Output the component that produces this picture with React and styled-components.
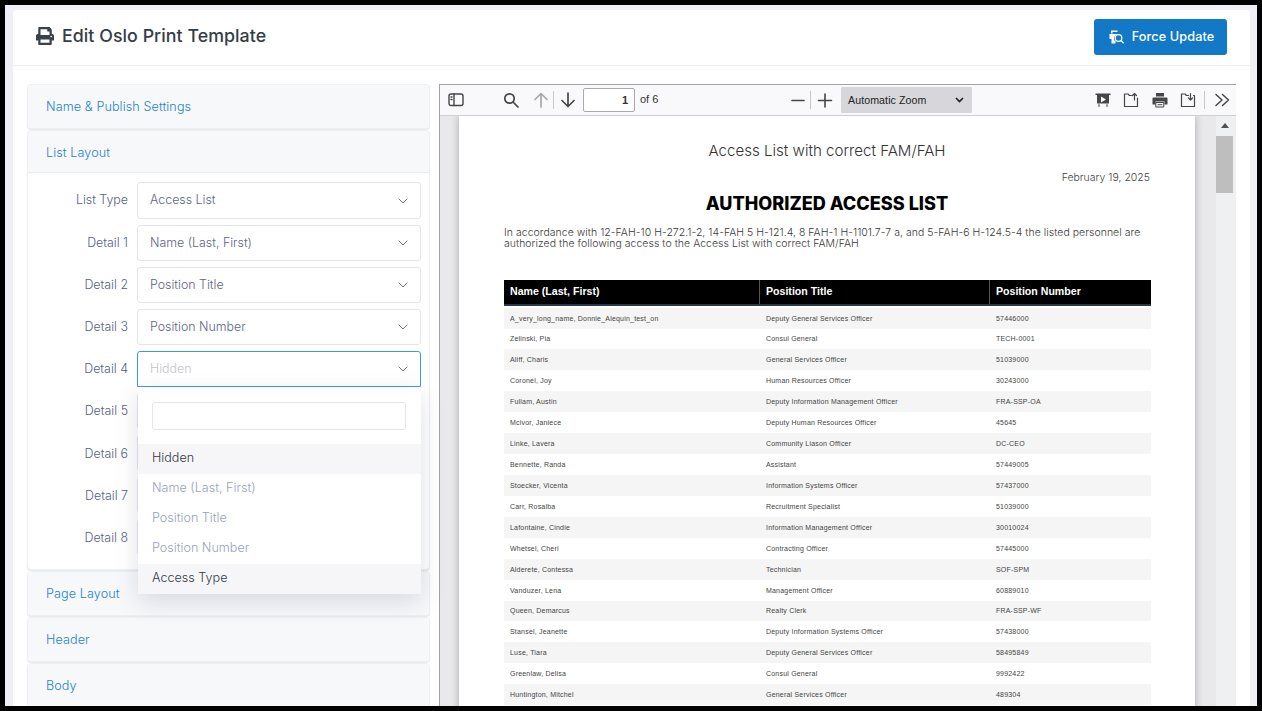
import React from "react";
import styled, { createGlobalStyle } from "styled-components";
import { FaPrint } from "react-icons/fa";

const Global = createGlobalStyle`
  html, body { margin: 0; padding: 0; height: 100%; overflow: hidden; background: #000; }
  #root { height: 100%; }
  * { box-sizing: border-box; }
`;
const Frame = styled.div`
  height: 711px; width: 1262px; border: 5px solid #000; background: #f0eff5;
  padding: 5px 7px 0 8px; overflow: hidden; font-family: Inter, "Noto Sans", sans-serif; display: flex;
`;
const Card = styled.div`
  flex: 1; background: #fff; border-radius: 4px 4px 0 0; display: flex; flex-direction: column; min-width: 0;
`;
const TopBar = styled.header`
  height: 56px; flex: none; border-bottom: 1px solid #eef0f3; display: flex; align-items: center;
  justify-content: space-between; padding: 0 23px 2px 23px;
`;
const Title = styled.h1`
  margin: 0 0 2px; display: flex; align-items: center; gap: 8px; font-size: 17.8px; font-weight: 500; color: #343d46;
  letter-spacing: 0.05px;
  svg { width: 18px; height: 18px; color: #3a4249; }
`;
const PrimaryButton = styled.button`
  width: 133px; height: 36px; background: #1379c6; color: #fff; border: 0; border-radius: 3px; font: 500 12.7px Inter, sans-serif;
  display: flex; align-items: center; justify-content: center; gap: 7px; padding: 0 0 0 1px; letter-spacing: 0.1px;
`;
const Body = styled.div`
  flex: 1; min-height: 0; display: flex; gap: 9px; padding: 18px 14px 0 14px; overflow: hidden;
`;
const LeftCol = styled.div` width: 403px; flex: none; display: flex; flex-direction: column; gap: 1px; `;
const Accordion = styled.section`
  flex: none; border: 1px solid #edeff3; border-radius: 4px; background: #fff; box-shadow: 0 1px 1px #e8e9ee;
`;
const AccHead = styled.div`
  height: ${p => p.$h || 43}px; background: #f7f8fa; color: #2484cb; font-size: 12.6px; font-weight: 350; display: flex; align-items: center;
  padding: 0 18px 1px; border-radius: 4px; letter-spacing: 0.1px;
  ${p => p.$open && "border-bottom: 1px solid #e9ebef; border-radius: 4px 4px 0 0; padding-top: 2px; padding-bottom: 0;"}
`;
const AccBody = styled.div` height: 396px; padding: 9px 8px 0 0; display: flex; flex-direction: column; gap: 6px; `;
const FieldRow = styled.div`
  display: grid; grid-template-columns: 100px 1fr; column-gap: 9px; align-items: center; height: ${p => p.$h || 36}px; position: relative;
`;
const Label = styled.label` text-align: right; font-size: 12.4px; font-weight: 350; color: #575f88; padding-bottom: ${p => p.$pb || 0}px; `;
const Select = styled.div`
  height: 100%; border: 1px solid ${p => p.$focus ? "#3d9ae0" : "#e2e5ec"}; border-radius: 3px; display: flex; align-items: center;
  justify-content: space-between; padding: 0 12px 2px; font-size: 12.4px; font-weight: 350; color: ${p => p.$focus ? "#c3c5cd" : "#5e6585"}; background: #fff;
  ${p => p.$focus && "border-radius: 3px 3px 0 0;"}
  svg { margin-top: 2px; }
`;
const Menu = styled.div`
  position: absolute; left: 110px; right: 0; top: 36px; height: 207px; background: #fff; z-index: 3;
  box-shadow: 0 8px 22px rgba(60,70,100,.16); display: flex; flex-direction: column; padding-top: 15px;
`;
const SearchBox = styled.div` height: 28px; margin: 0 15px 14px 14px; border: 1px solid #e2e5ec; border-radius: 3px; flex: none; `;
const Option = styled.div`
  height: 30px; flex: none; padding: 0 14px 3px; display: flex; align-items: center; font-size: 12.6px; font-weight: 350;
  color: ${p => p.$active ? "#333a44" : "#9a9fbf"}; background: ${p => p.$active ? "#f6f6f9" : "#fff"};
`;
const Viewer = styled.div`
  width: 797px; flex: none; border: 1px solid #a3a3a6; border-right: 0; border-bottom: 0; display: flex; flex-direction: column; background: #e9e9ec; min-height: 0;
`;
const Toolbar = styled.div`
  height: 31px; flex: none; background: #f9f9fb; border-bottom: 1px solid #cfcfd3; display: grid;
  grid-template-columns: 350px 305px 1fr; font-family: "Liberation Sans", sans-serif; font-size: 11px; color: #15141a;
`;
const ToolGroup = styled.div` display: flex; align-items: center; `;
const ToolIcon = styled.svg`
  width: ${p => p.$w || 16}px; height: 16px; flex: none; margin-left: ${p => p.$ml || 0}px; fill: none; stroke: #45454a; stroke-width: 1.4; stroke-linecap: round; stroke-linejoin: round;
  opacity: ${p => p.$dim ? .45 : 1};
`;
const Sep = styled.span` width: 1px; height: 18px; background: #c8c8cc; flex: none; margin-left: ${p => p.$ml || 5}px; `;
const PageInput = styled.div`
  width: 52px; height: 24px; margin-left: 7px; border: 1px solid #a9a9ad; border-radius: 2px; background: #fff; text-align: right;
  padding: 5px 6px 0 0; font-size: 11px; font-weight: 700; color: #333; 
`;
const OfPages = styled.span` margin-left: 5px; color: #333; padding-bottom: 2px; `;
const ZoomSelect = styled.div`
  width: 131px; height: 26px; margin-left: 8px; background: #d7d7db; border-radius: 1px; display: flex; align-items: center; justify-content: space-between;
  padding: 0 8px 0 7px; font-size: 10.6px; color: #222; letter-spacing: .1px; 
`;
const ViewerMain = styled.div` flex: 1; min-height: 0; display: flex; overflow: hidden; `;
const PageArea = styled.div` flex: 1; min-width: 0; padding-left: 19px; overflow: hidden; `;
const Page = styled.div`
  width: 736px; height: 700px; background: #fff; box-shadow: 0 0 8px rgba(0,0,0,.28); padding: 25px 44px 0 45px; color: #333;
`;
const Scrollbar = styled.div`
  width: 20px; flex: none; background: #eff0f2; display: flex; flex-direction: column; align-items: center; padding: 7px 3px 0 0;
`;
const Arrow = styled.div` width: 0; height: 0; border: 4.5px solid transparent; border-top: 0; border-bottom: 5px solid #505050; margin-bottom: 8px; `;
const Thumb = styled.div` width: 17px; height: 57px; background: #bebebe; flex: none; `;
const DocHead = styled.div` text-align: center; font-size: 15.1px; font-weight: 300; color: #333; line-height: 20px; padding-right: 1px; `;
const DocDate = styled.div` text-align: right; font-size: 10.5px; font-weight: 350; color: #444; line-height: 14px; margin-top: 10px; padding-right: 1px; `;
const DocTitle = styled.div` text-align: center; font-size: 18.1px; font-weight: 800; color: #000; line-height: 24px; margin-top: 6px; padding-right: 1px; `;
const DocPara = styled.p` margin: 12px 0 0; font-size: 10.46px; line-height: 11.3px; color: #3a3a3a; font-weight: 350; letter-spacing: .05px; white-space: nowrap; `;
const Table = styled.div` margin-top: 30px; font-family: "Liberation Sans", sans-serif; `;
const HeadRow = styled.div`
  display: grid; grid-template-columns: 255px 230px 1fr; height: 26px; background: #000; border-bottom: 2px solid #2c3550; margin-bottom: 2px;
`;
const HeadCell = styled.div`
  color: #fff; font-weight: 700; font-size: 10.6px; padding: 5px 6px 0; border-left: ${p => p.$first ? 0 : "1px solid #555"};
`;
const Row = styled.div`
  display: grid; grid-template-columns: 256px 230px 1fr; height: 20.93px; background: ${p => p.$odd ? "#f5f5f5" : "#fff"}; align-items: center;
`;
const Cell = styled.div`
  font-size: 7px; letter-spacing: .2px; color: #444; padding: 0 6px; white-space: nowrap;
`;

const Chevron = () => (
  <svg width="10" height="6" viewBox="0 0 10 6" fill="none" stroke="#5c6472" strokeWidth="0.9"><path d="M.7.7 5 5l4.3-4.3" /></svg>
);
const fields = [["Detail 1","Name (Last, First)"],["Detail 2","Position Title"],["Detail 3","Position Number"]];
const rows = [
["A_very_long_name, Donnie_Alequin_test_on","Deputy General Services Officer","57446000"],
["Zelinski, Pia","Consul General","TECH-0001"],
["Aliff, Charis","General Services Officer","51039000"],
["Coronel, Joy","Human Resources Officer","30243000"],
["Fullam, Austin","Deputy Information Management Officer","FRA-SSP-OA"],
["Mcivor, Janiece","Deputy Human Resources Officer","45645"],
["Linke, Lavera","Community Liason Officer","DC-CEO"],
["Bennette, Randa","Assistant","57449005"],
["Stoecker, Vicenta","Information Systems Officer","57437000"],
["Carr, Rosalba","Recruitment Specialist","51039000"],
["Lafontaine, Cindie","Information Management Officer","30010024"],
["Whetsel, Cheri","Contracting Officer","57445000"],
["Alderete, Contessa","Technician","SOF-SPM"],
["Vanduzer, Lena","Management Officer","60889010"],
["Queen, Demarcus","Realty Clerk","FRA-SSP-WF"],
["Stansel, Jeanette","Deputy Information Systems Officer","57438000"],
["Luse, Tiara","Deputy General Services Officer","58495849"],
["Greenlaw, Delisa","Consul General","9992422"],
["Huntington, Mitchel","General Services Officer","489304"],
];

export default function App() {
  return (
    <Frame>
      <Global />
      <Card>
        <TopBar>
          <Title><FaPrint />Edit Oslo Print Template</Title>
          <PrimaryButton>
            <svg width="17" height="16" viewBox="0 0 17 16"><path fill="#fff" d="M3 1.5h6.5V3H4.5v1.5H3zM1.5 5h9.5A4.5 4.5 0 0 0 6.8 12H3.5v-2h-2z"/><circle cx="10.5" cy="9" r="3.3" fill="none" stroke="#fff" strokeWidth="1.2"/><path stroke="#fff" strokeWidth="1.3" d="m13 11.5 2.6 2.8"/><path fill="#fff" d="M3.5 12h4v2.5h-4z"/></svg>
            Force Update
          </PrimaryButton>
        </TopBar>
        <Body>
          <LeftCol>
            <Accordion><AccHead>Name &amp; Publish Settings</AccHead></Accordion>
            <Accordion>
              <AccHead $open $h={42}>List Layout</AccHead>
              <AccBody>
                <FieldRow $h={37}><Label $pb={2}>List Type</Label><Select>Access List<Chevron /></Select></FieldRow>
                {fields.map(([l, v]) => (
                  <FieldRow key={l}><Label $pb={2}>{l}</Label><Select>{v}<Chevron /></Select></FieldRow>
                ))}
                <FieldRow>
                  <Label $pb={2}>Detail 4</Label><Select $focus>Hidden<Chevron /></Select>
                  <Menu>
                    <SearchBox />
                    <Option $active>Hidden</Option>
                    <Option>Name (Last, First)</Option>
                    <Option>Position Title</Option>
                    <Option>Position Number</Option>
                    <Option $active>Access Type</Option>
                  </Menu>
                </FieldRow>
                {[5,6,7,8].map(n => (
                  <FieldRow key={n}><Label $pb={n === 5 ? 2 : 0}>Detail {n}</Label><Select /></FieldRow>
                ))}
              </AccBody>
            </Accordion>
            <Accordion><AccHead>Page Layout</AccHead></Accordion>
            <Accordion><AccHead>Header</AccHead></Accordion>
            <Accordion><AccHead>Body</AccHead></Accordion>
          </LeftCol>
          <Viewer>
            <Toolbar>
              <ToolGroup>
                <ToolIcon $ml={8} viewBox="0 0 16 16"><rect x="1" y="2" width="14" height="11.5" rx="2"/><path d="M6 2v11.5"/><path d="M3 5h1M3 7.5h1" /></ToolIcon>
                <ToolIcon $ml={39} viewBox="0 0 16 16" style={{strokeWidth:1.7}}><circle cx="6.5" cy="6.5" r="4.7"/><path d="m10 10 5 5"/></ToolIcon>
                <ToolIcon $ml={14} $dim viewBox="0 0 16 16" style={{strokeWidth:1.7}}><path d="M8 15V1.5M2 7.5l6-6 6 6"/></ToolIcon>
                <Sep $ml={4}/>
                <ToolIcon $ml={6} viewBox="0 0 16 16" style={{strokeWidth:1.7}}><path d="M8 1v13.5M2 8.5l6 6 6-6"/></ToolIcon>
                <PageInput>1</PageInput>
                <OfPages>of 6</OfPages>
              </ToolGroup>
              <ToolGroup>
                <ToolIcon viewBox="0 0 16 16" style={{strokeWidth:1.6}}><path d="M2 8.5h12"/></ToolIcon>
                <Sep $ml={4}/>
                <ToolIcon $ml={6} viewBox="0 0 16 16" style={{strokeWidth:1.6}}><path d="M1.5 8.5h13M8 2v13"/></ToolIcon>
                <ZoomSelect>Automatic Zoom
                  <svg width="9" height="6" viewBox="0 0 9 6" fill="none" stroke="#222" strokeWidth="1.7"><path d="m1 1 3.5 3.5L8 1"/></svg>
                </ZoomSelect>
              </ToolGroup>
              <ToolGroup>
                <ToolIcon viewBox="0 0 16 16"><path fill="#45454a" stroke="none" d="M.5 1.5h15V3H14v8.5H2V3H.5z"/><path fill="#f9f9fb" stroke="none" d="M6 4.5 11 7.5 6 10.5z"/><path d="M4 12.5v2M12 12.5v2" strokeWidth="1"/></ToolIcon>
                <ToolIcon $ml={12} viewBox="0 0 16 16" style={{strokeWidth:1.2}}><path d="M8.5 3.5H6.5L5 2H1.5v12.5h13V6"/><path d="M11.5 8V1.5M9.5 3.5l2-2 2 2"/></ToolIcon>
                <ToolIcon $ml={13} viewBox="0 0 16 16"><path fill="#45454a" stroke="none" d="M4 1h8v3.5H4zM1.5 5.5h13a1 1 0 0 1 1 1v6H12.5v-3h-9v3H.5v-6a1 1 0 0 1 1-1z"/><path d="M4.2 10.5h7.6v4.5H4.2zM6 12.7h4" strokeWidth="1"/></ToolIcon>
                <ToolIcon $ml={12} viewBox="0 0 16 16" style={{strokeWidth:1.2}}><path d="M8.5 3.5H6.5L5 2H1.5v12.5h13V3.5h-1"/><path d="M10.5 1.5V8M8.5 6l2 2 2-2"/></ToolIcon>
                <Sep $ml={8}/>
                <ToolIcon $ml={9} viewBox="0 0 16 16" style={{strokeWidth:1.5}}><path d="m2 2.5 6 5.5-6 5.5M8.5 2.5l6 5.5-6 5.5"/></ToolIcon>
              </ToolGroup>
            </Toolbar>
            <ViewerMain>
              <PageArea>
                <Page>
                  <DocHead>Access List with correct FAM/FAH</DocHead>
                  <DocDate>February 19, 2025</DocDate>
                  <DocTitle>AUTHORIZED ACCESS LIST</DocTitle>
                  <DocPara>In accordance with 12-FAH-10 H-272.1-2, 14-FAH 5 H-121.4, 8 FAH-1 H-1101.7-7 a, and 5-FAH-6 H-124.5-4 the listed personnel are<br/>authorized the following access to the Access List with correct FAM/FAH</DocPara>
                  <Table>
                    <HeadRow><HeadCell $first>Name (Last, First)</HeadCell><HeadCell>Position Title</HeadCell><HeadCell>Position Number</HeadCell></HeadRow>
                    {rows.map((r, i) => (
                      <Row key={i} $odd={i % 2 === 0}>{r.map(c => <Cell key={c}>{c}</Cell>)}</Row>
                    ))}
                  </Table>
                </Page>
              </PageArea>
              <Scrollbar><Arrow /><Thumb /></Scrollbar>
            </ViewerMain>
          </Viewer>
        </Body>
      </Card>
    </Frame>
  );
}
